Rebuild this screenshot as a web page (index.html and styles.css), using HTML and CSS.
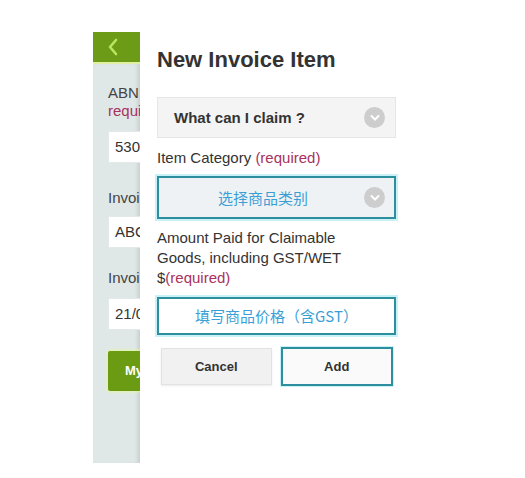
FILE: index.html
```html
<!DOCTYPE html>
<html lang="en">
<head>
    <meta charset="UTF-8">
    <title>New Invoice Item</title>
    <link rel="stylesheet" href="styles.css">
</head>
<body>
    <div class="screen">
        <div class="back-page">
            <div class="back-header">
                <svg width="12" height="20" viewBox="0 0 12 20"><path d="M9 3 L3 10 L9 17" fill="none" stroke="#b9e65c" stroke-width="2.6" stroke-linecap="round" stroke-linejoin="round"/></svg>
            </div>
            <div class="back-body">
                <div class="back-label">ABN<br><span class="req">required</span></div>
                <div class="back-input">5301</div>
                <div class="back-label single">Invoice</div>
                <div class="back-input tight">ABC</div>
                <div class="back-label single second">Invoice</div>
                <div class="back-input">21/06</div>
                <div class="back-btn">My</div>
            </div>
        </div>

        <div class="dialog">
            <h2 class="title">New Invoice Item</h2>

            <div class="select plain">
                <span class="select-text bold">What can I claim ?</span>
                <span class="drop-icon"><svg width="10" height="8" viewBox="0 0 10 8"><path d="M1.5 2 L5 5.5 L8.5 2" fill="none" stroke="#fff" stroke-width="2" stroke-linecap="round"/></svg></span>
            </div>

            <div class="label first">Item Category <span class="req">(required)</span></div>

            <div class="select focus">
                <span class="select-text cjk">选择商品类别</span>
                <span class="drop-icon"><svg width="10" height="8" viewBox="0 0 10 8"><path d="M1.5 2 L5 5.5 L8.5 2" fill="none" stroke="#fff" stroke-width="2" stroke-linecap="round"/></svg></span>
            </div>

            <div class="label">Amount Paid for Claimable Goods, including GST/WET<br>$<span class="req">(required)</span></div>

            <div class="amount cjk">填写商品价格（含GST）</div>

            <div class="actions">
                <div class="btn cancel">Cancel</div>
                <div class="btn add">Add</div>
            </div>
        </div>
    </div>
</body>
</html>
```

FILE: styles.css
```css
body {
    margin: 0;
    background-color: #fff;
    font-family: "Liberation Sans", Arial, "Noto Sans CJK SC", sans-serif;
    color: #333;
}
.screen {
    display: flex;
    padding: 32px 0 0 93px;
}
.back-page {
    width: 47px;
    overflow: hidden;
    flex-shrink: 0;
}
.back-header {
    height: 32px;
    background-color: #6c9c17;
    display: flex;
    align-items: center;
    padding-left: 14px;
    box-sizing: border-box;
    border-bottom: 2px solid #dff0a0;
}
.back-body {
    height: 399px;
    background-color: #e0e8e7;
    box-shadow: inset -4px 0 4px -2px rgba(0, 0, 0, 0.12);
    padding: 20px 0 0 15px;
    box-sizing: border-box;
    font-size: 15px;
}
.back-label {
    line-height: 18px;
    color: #444;
    white-space: nowrap;
}
.back-label.single {
    margin-top: 26px;
}
.back-label.single.second {
    margin-top: 21px;
}
.req {
    color: #a8325c;
}
.back-input {
    margin-top: 11px;
    width: 90px;
    height: 32px;
    background-color: #fff;
    border: 1px solid #e3e8e8;
    box-sizing: border-box;
    line-height: 30px;
    padding-left: 6px;
}
.back-input.tight {
    margin-top: 9px;
}
.back-btn {
    margin-top: 21px;
    width: 80px;
    height: 40px;
    background-color: #6b9b12;
    box-shadow: 0 0 3px 1px #e4f5a8;
    color: #fff;
    font-weight: bold;
    font-size: 13px;
    line-height: 40px;
    padding-left: 17px;
    box-sizing: border-box;
    border-radius: 2px;
}
.dialog {
    flex: 1;
    background-color: #fff;
    padding: 15px 0 0 17px;
    height: 431px;
    box-sizing: border-box;
}
.title {
    margin: 0;
    font-size: 22px;
    line-height: 26px;
    font-weight: bold;
    color: #333;
}
.select {
    width: 239px;
    box-sizing: border-box;
    display: flex;
    align-items: center;
    justify-content: space-between;
}
.select.plain {
    margin-top: 24px;
    height: 41px;
    background-color: #f4f4f4;
    border: 1px solid #e6e6e6;
    padding: 0 10px 0 16px;
}
.select.focus {
    margin-top: 8px;
    height: 43px;
    background-color: #eef2f5;
    border: 2px solid #2d8e9e;
    box-shadow: 0 0 0 2px #c9f1f8;
    padding: 0 9px 0 59px;
}
.select-text {
    font-size: 15px;
}
.select-text.bold {
    font-weight: bold;
    color: #333;
}
.cjk {
    font-family: "Noto Sans CJK SC", "Liberation Sans", sans-serif;
    color: #3b9fd6;
}
.drop-icon {
    width: 21px;
    height: 21px;
    border-radius: 50%;
    background-color: #cdcdcd;
    display: flex;
    align-items: center;
    justify-content: center;
}
.label {
    font-size: 15px;
    line-height: 20px;
    width: 215px;
    margin-top: 9px;
}
.label.first {
    margin-top: 10px;
    width: auto;
}
.amount {
    margin-top: 9px;
    width: 239px;
    height: 38px;
    box-sizing: border-box;
    border: 2px solid #2d8e9e;
    box-shadow: 0 0 0 2px #c9f1f8;
    background-color: #fff;
    font-size: 15px;
    text-align: center;
    line-height: 34px;
}
.actions {
    margin-top: 12px;
    width: 239px;
    display: flex;
    align-items: center;
    gap: 9px;
    padding: 0 3px 0 4px;
    box-sizing: border-box;
}
.btn {
    flex: 1;
    font-size: 13px;
    font-weight: bold;
    text-align: center;
    box-sizing: border-box;
    color: #333;
}
.btn.cancel {
    height: 37px;
    line-height: 35px;
    background-color: #f1f1f1;
    border: 1px solid #e2e2e2;
    box-shadow: 0 1px 2px rgba(0, 0, 0, 0.08);
}
.btn.add {
    height: 39px;
    line-height: 35px;
    background-color: #fafafa;
    border: 2px solid #2d8e9e;
    box-shadow: 0 0 0 1px #c9f1f8;
}
```
